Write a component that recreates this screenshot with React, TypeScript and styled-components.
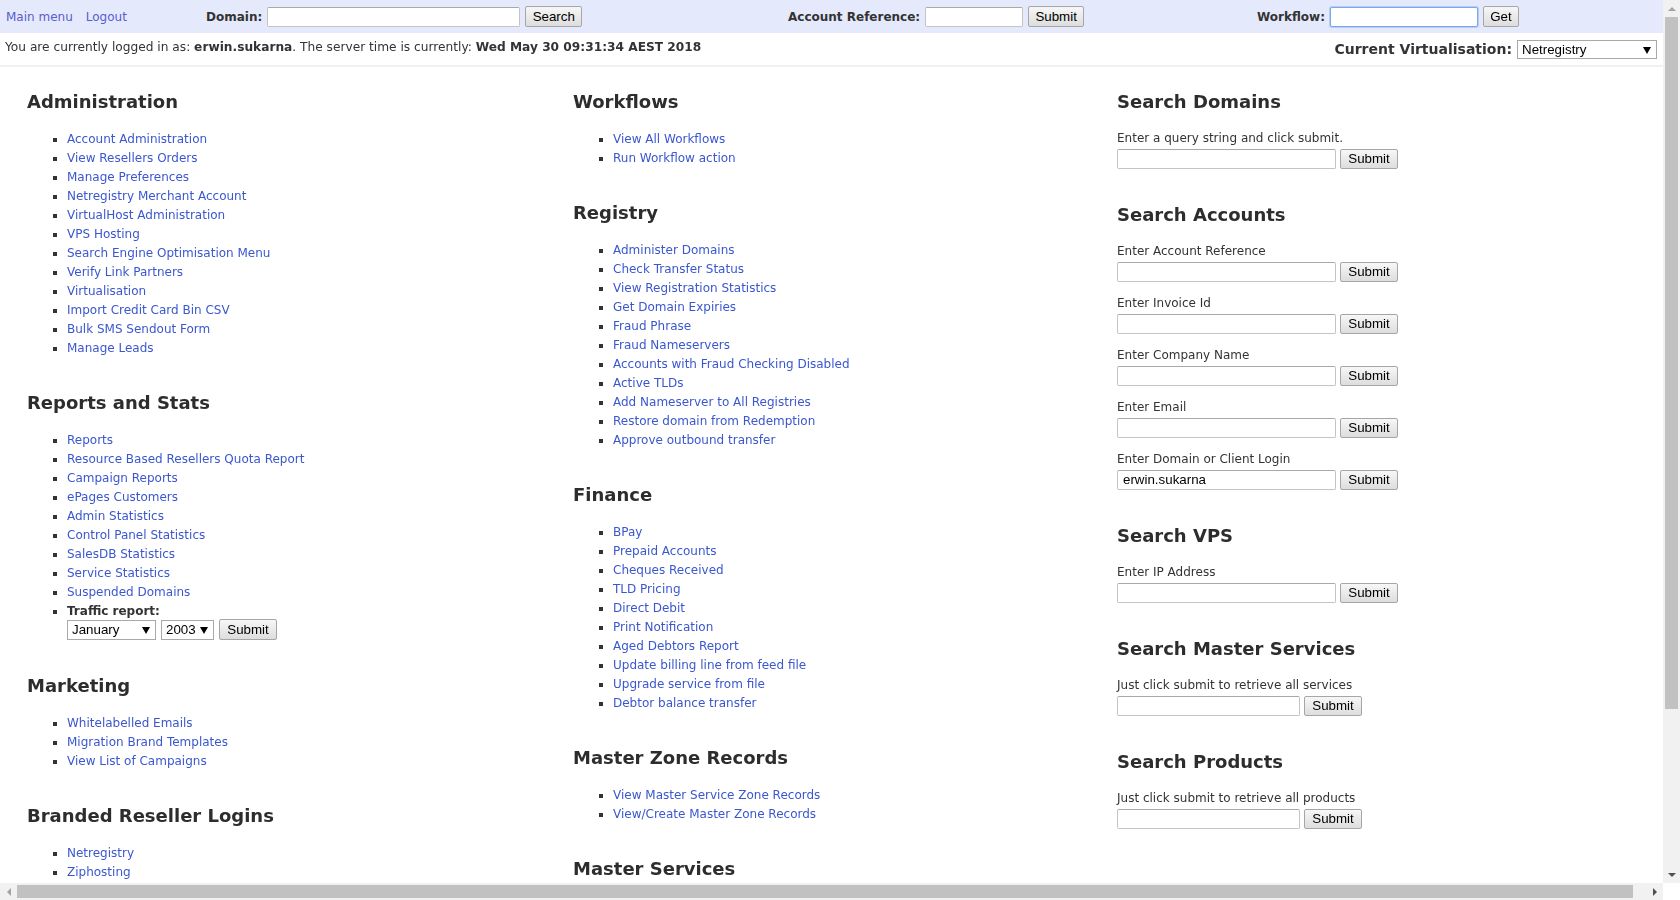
import React from "react";
import styled, { createGlobalStyle } from "styled-components";

const GlobalStyle = createGlobalStyle`
  html, body { margin: 0; padding: 0; overflow: hidden; background: #fff; }
  body { font-family: "DejaVu Sans", Verdana, sans-serif; font-size: 12px; color: #333; }
  * { box-sizing: border-box; }
`;

const Frame = styled.div`
  width: 1680px;
  height: 900px;
  display: grid;
  grid-template-columns: 1663px 17px;
  grid-template-rows: 883px 17px;
`;

const Viewport = styled.div`
  overflow: hidden;
  min-width: 0;
  min-height: 0;
`;

const VScroll = styled.div`
  display: flex;
  flex-direction: column;
  background: #f1f1f1;
`;

const HScroll = styled.div`
  display: flex;
  align-items: stretch;
  background: #f1f1f1;
`;

const Corner = styled.div`
  background: #fff;
`;

const ArrowBox = styled.div<{ $end?: boolean }>`
  width: 17px;
  height: 17px;
  flex: none;
  display: flex;
  align-items: center;
  justify-content: center;
  ${(p) => (p.$end ? "margin-top: auto;" : "")}
`;

const HArrowBox = styled(ArrowBox)`
  ${(p) => (p.$end ? "margin-top: 0; margin-left: auto;" : "")}
`;

const Tri = styled.span<{ $dir: "up" | "down" | "left" | "right"; $dark?: boolean }>`
  width: 0;
  height: 0;
  ${(p) => {
    const c = p.$dark ? "#505050" : "#a3a3a3";
    switch (p.$dir) {
      case "up":
        return `border-left:4px solid transparent;border-right:4px solid transparent;border-bottom:4px solid ${c};`;
      case "down":
        return `border-left:4px solid transparent;border-right:4px solid transparent;border-top:4px solid ${c};`;
      case "left":
        return `border-top:4px solid transparent;border-bottom:4px solid transparent;border-right:4px solid ${c};`;
      default:
        return `border-top:4px solid transparent;border-bottom:4px solid transparent;border-left:4px solid ${c};`;
    }
  }}
`;

const VThumb = styled.div`
  height: 692px;
  margin: 0 2px;
  background: #c1c1c1;
`;

const HThumb = styled.div`
  width: 1616px;
  margin: 2px 0;
  background: #c1c1c1;
`;

/* ---------- Top bar ---------- */

const TopBar = styled.div`
  height: 33px;
  background: #e4eafc;
  display: grid;
  grid-template-columns: 200px 582px 469px auto;
  align-items: center;
  padding-left: 6px;
`;

const NavLinks = styled.div`
  display: flex;
  gap: 13px;
`;

const NavLink = styled.a`
  color: #5b5bd0;
  text-decoration: none;
  font-size: 12px;
`;

const FormGroup = styled.div`
  display: flex;
  align-items: center;
  gap: 5px;
`;

const BarLabel = styled.label`
  font-weight: bold;
  font-size: 12px;
  color: #333;
`;

const TextInput = styled.input<{ $w: number; $focused?: boolean }>`
  width: ${(p) => p.$w}px;
  height: 20px;
  padding: 1px 5px;
  border: 1px solid #c4c4c4;
  border-top-color: #a9a9a9;
  border-radius: 2px;
  background: #fff;
  font: 13.33px "Liberation Sans", Arial, sans-serif;
  color: #000;
  outline: none;
  flex: none;
  ${(p) =>
    p.$focused
      ? "border-color: #7ea6ea; box-shadow: 0 0 0 1px #b7cdf4; caret-color: #000;"
      : ""}
`;

const Button = styled.button<{ $w: number; $h?: number }>`
  width: ${(p) => p.$w}px;
  height: ${(p) => p.$h ?? 21}px;
  padding: 0;
  font: 13.33px "Liberation Sans", Arial, sans-serif;
  color: #000;
  background: linear-gradient(#f7f7f7, #dddddd);
  border: 1px solid #a6a6a6;
  border-radius: 2px;
  flex: none;
`;

/* ---------- Info bar ---------- */

const InfoBar = styled.div`
  height: 34px;
  padding: 5px 6px 0 5px;
  display: flex;
  justify-content: space-between;
  align-items: flex-start;
  border-bottom: 2px solid #f1f1f1;
  line-height: 19px;
`;

const InfoText = styled.div`
  font-size: 12.2px;
  color: #333;
`;

const VirtGroup = styled.div`
  display: flex;
  align-items: center;
  gap: 5px;
  padding-top: 2px;
`;

const VirtLabel = styled.label`
  font-weight: bold;
  font-size: 14px;
  color: #333;
`;

const SelectWrap = styled.span<{ $w: number; $h?: number }>`
  position: relative;
  display: inline-block;
  width: ${(p) => p.$w}px;
  height: ${(p) => p.$h ?? 20}px;
  flex: none;
`;

const NativeSelect = styled.select`
  appearance: none;
  -webkit-appearance: none;
  width: 100%;
  height: 100%;
  border: 1px solid #a9a9a9;
  border-radius: 0;
  background: #fff;
  padding: 0 14px 0 4px;
  font: 13.33px "Liberation Sans", Arial, sans-serif;
  color: #000;
  outline: none;
`;

const SelectArrow = styled.span`
  position: absolute;
  right: 6px;
  top: 50%;
  margin-top: -3px;
  width: 0;
  height: 0;
  border-left: 4px solid transparent;
  border-right: 4px solid transparent;
  border-top: 7px solid #000;
  pointer-events: none;
`;

/* ---------- Main columns ---------- */

const Main = styled.div`
  display: grid;
  grid-template-columns: 546px 544px 545px;
  padding: 23px 0 0 27px;
  align-items: start;
`;

const Column = styled.div`
  display: flex;
  flex-direction: column;
`;

const Section = styled.section<{ $gap?: number }>`
  margin-bottom: ${(p) => p.$gap ?? 34}px;
`;

const Heading = styled.h2`
  margin: 0 0 16px;
  font-size: 18px;
  line-height: 23px;
  font-weight: bold;
  color: #2d2d2d;
`;

const LinkList = styled.ul`
  margin: 0;
  padding: 1px 0 0 40px;
  list-style: square;
  line-height: 19px;
`;

const LinkItem = styled.li`
  &::marker {
    color: #333;
  }
`;

const Link = styled.a`
  color: #3b57cf;
  text-decoration: none;
`;

const BoldText = styled.strong`
  color: #333;
`;

const TrafficLabel = styled.strong`
  display: block;
  line-height: 16px;
  color: #333;
`;

const TrafficRow = styled.div`
  display: flex;
  align-items: center;
  gap: 5px;
  height: 21px;
`;

const FieldGroup = styled.div`
  margin-bottom: 12px;
  &:last-child { margin-bottom: 0; }
`;

const FieldLabel = styled.div`
  line-height: 19px;
  color: #333;
`;

const FieldRow = styled.div`
  display: flex;
  align-items: center;
  gap: 4px;
  height: 21px;
`;

/* ---------- Data ---------- */

type LinkSection = { title: string; links: string[] };

const adminSection: LinkSection = {
  title: "Administration",
  links: [
    "Account Administration",
    "View Resellers Orders",
    "Manage Preferences",
    "Netregistry Merchant Account",
    "VirtualHost Administration",
    "VPS Hosting",
    "Search Engine Optimisation Menu",
    "Verify Link Partners",
    "Virtualisation",
    "Import Credit Card Bin CSV",
    "Bulk SMS Sendout Form",
    "Manage Leads",
  ],
};

const reports = [
  "Reports",
  "Resource Based Resellers Quota Report",
  "Campaign Reports",
  "ePages Customers",
  "Admin Statistics",
  "Control Panel Statistics",
  "SalesDB Statistics",
  "Service Statistics",
  "Suspended Domains",
];

const leftAfter: LinkSection[] = [
  {
    title: "Marketing",
    links: ["Whitelabelled Emails", "Migration Brand Templates", "View List of Campaigns"],
  },
  { title: "Branded Reseller Logins", links: ["Netregistry", "Ziphosting"] },
];

const middleSections: LinkSection[] = [
  { title: "Workflows", links: ["View All Workflows", "Run Workflow action"] },
  {
    title: "Registry",
    links: [
      "Administer Domains",
      "Check Transfer Status",
      "View Registration Statistics",
      "Get Domain Expiries",
      "Fraud Phrase",
      "Fraud Nameservers",
      "Accounts with Fraud Checking Disabled",
      "Active TLDs",
      "Add Nameserver to All Registries",
      "Restore domain from Redemption",
      "Approve outbound transfer",
    ],
  },
  {
    title: "Finance",
    links: [
      "BPay",
      "Prepaid Accounts",
      "Cheques Received",
      "TLD Pricing",
      "Direct Debit",
      "Print Notification",
      "Aged Debtors Report",
      "Update billing line from feed file",
      "Upgrade service from file",
      "Debtor balance transfer",
    ],
  },
  {
    title: "Master Zone Records",
    links: ["View Master Service Zone Records", "View/Create Master Zone Records"],
  },
  { title: "Master Services", links: [] },
];

type Field = { label: string; value?: string; narrow?: boolean };
type FormSection = { title: string; fields: Field[] };

const rightSections: FormSection[] = [
  { title: "Search Domains", fields: [{ label: "Enter a query string and click submit." }] },
  {
    title: "Search Accounts",
    fields: [
      { label: "Enter Account Reference" },
      { label: "Enter Invoice Id" },
      { label: "Enter Company Name" },
      { label: "Enter Email" },
      { label: "Enter Domain or Client Login", value: "erwin.sukarna" },
    ],
  },
  { title: "Search VPS", fields: [{ label: "Enter IP Address" }] },
  {
    title: "Search Master Services",
    fields: [{ label: "Just click submit to retrieve all services", narrow: true }],
  },
  {
    title: "Search Products",
    fields: [{ label: "Just click submit to retrieve all products", narrow: true }],
  },
];

const Select: React.FC<{ w: number; h?: number; value: string; options: string[] }> = ({
  w,
  h,
  value,
  options,
}) => (
  <SelectWrap $w={w} $h={h}>
    <NativeSelect defaultValue={value}>
      {options.map((o) => (
        <option key={o}>{o}</option>
      ))}
    </NativeSelect>
    <SelectArrow />
  </SelectWrap>
);

const LinkBlock: React.FC<{ section: LinkSection }> = ({ section }) => (
  <Section $gap={33}>
    <Heading>{section.title}</Heading>
    {section.links.length > 0 && (
      <LinkList>
        {section.links.map((l) => (
          <LinkItem key={l}>
            <Link href="#">{l}</Link>
          </LinkItem>
        ))}
      </LinkList>
    )}
  </Section>
);

const months = [
  "January","February","March","April","May","June","July","August","September","October","November","December",
];

export default function App() {
  return (
    <>
      <GlobalStyle />
      <Frame>
        <Viewport>
          <TopBar>
            <NavLinks>
              <NavLink href="#">Main menu</NavLink>
              <NavLink href="#">Logout</NavLink>
            </NavLinks>
            <FormGroup>
              <BarLabel>Domain:</BarLabel>
              <TextInput $w={253} />
              <Button $w={57}>Search</Button>
            </FormGroup>
            <FormGroup>
              <BarLabel>Account Reference:</BarLabel>
              <TextInput $w={98} />
              <Button $w={56}>Submit</Button>
            </FormGroup>
            <FormGroup>
              <BarLabel>Workflow:</BarLabel>
              <TextInput $w={148} $focused autoFocus />
              <Button $w={36}>Get</Button>
            </FormGroup>
          </TopBar>

          <InfoBar>
            <InfoText>
              You are currently logged in as: <BoldText>erwin.sukarna</BoldText>. The server time is
              currently: <BoldText>Wed May 30 09:31:34 AEST 2018</BoldText>
            </InfoText>
            <VirtGroup>
              <VirtLabel>Current Virtualisation:</VirtLabel>
              <Select w={140} h={19} value="Netregistry" options={["Netregistry", "Ziphosting"]} />
            </VirtGroup>
          </InfoBar>

          <Main>
            <Column>
              <LinkBlock section={adminSection} />
              <Section $gap={34}>
                <Heading>Reports and Stats</Heading>
                <LinkList>
                  {reports.map((l) => (
                    <LinkItem key={l}>
                      <Link href="#">{l}</Link>
                    </LinkItem>
                  ))}
                  <LinkItem>
                    <TrafficLabel>Traffic report:</TrafficLabel>
                    <TrafficRow>
                      <Select w={89} value="January" options={months} />
                      <Select w={53} value="2003" options={["2003", "2004", "2005"]} />
                      <Button $w={58}>Submit</Button>
                    </TrafficRow>
                  </LinkItem>
                </LinkList>
              </Section>
              {leftAfter.map((s) => (
                <LinkBlock key={s.title} section={s} />
              ))}
            </Column>

            <Column>
              {middleSections.map((s) => (
                <LinkBlock key={s.title} section={s} />
              ))}
            </Column>

            <Column>
              {rightSections.map((s) => (
                <Section key={s.title}>
                  <Heading>{s.title}</Heading>
                  {s.fields.map((f) => (
                    <FieldGroup key={f.label}>
                      <FieldLabel>{f.label}</FieldLabel>
                      <FieldRow>
                        <TextInput $w={f.narrow ? 183 : 219} defaultValue={f.value} />
                        <Button $w={58} $h={20}>
                          Submit
                        </Button>
                      </FieldRow>
                    </FieldGroup>
                  ))}
                </Section>
              ))}
            </Column>
          </Main>
        </Viewport>

        <VScroll>
          <ArrowBox>
            <Tri $dir="up" />
          </ArrowBox>
          <VThumb />
          <ArrowBox $end>
            <Tri $dir="down" $dark />
          </ArrowBox>
        </VScroll>

        <HScroll>
          <HArrowBox>
            <Tri $dir="left" />
          </HArrowBox>
          <HThumb />
          <HArrowBox $end>
            <Tri $dir="right" $dark />
          </HArrowBox>
        </HScroll>
        <Corner />
      </Frame>
    </>
  );
}
